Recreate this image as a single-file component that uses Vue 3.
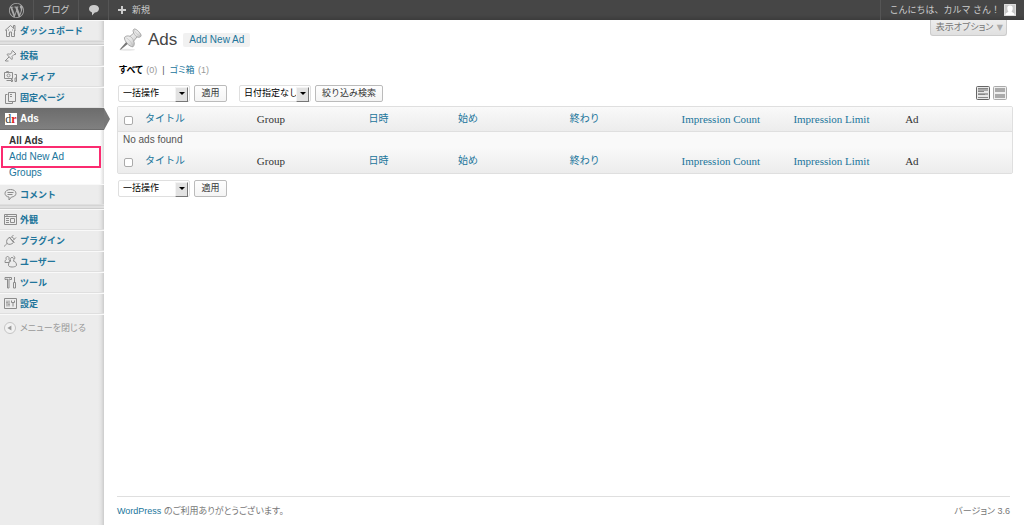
<template>
  <div class="admin">
    <header class="adminbar">
      <a href="#" class="bar-item bar-logo" aria-label="WordPress">
        <svg width="15" height="15" viewBox="0 0 20 20">
          <path fill="#aaa" d="M20 10c0-5.51-4.49-10-10-10C4.48 0 0 4.49 0 10c0 5.52 4.48 10 10 10 5.51 0 10-4.48 10-10zM7.78 15.37L4.37 6.22c.55-.02 1.17-.08 1.17-.08.5-.06.44-1.13-.06-1.11 0 0-1.45.11-2.37.11-.18 0-.37 0-.58-.01C4.12 2.69 6.87 1.11 10 1.11c2.33 0 4.45.87 6.05 2.34-.68-.11-1.65.39-1.65 1.58 0 .74.45 1.36.9 2.1.35.61.55 1.36.55 2.46 0 1.49-1.4 5-1.4 5l-3.03-8.37c.54-.02.82-.17.82-.17.5-.05.44-1.25-.06-1.22 0 0-1.44.12-2.38.12-.87 0-2.33-.12-2.33-.12-.5-.03-.56 1.2-.06 1.22l.92.08 1.26 3.41zM17.41 10c.24-.64.74-1.87.43-4.25.7 1.29 1.05 2.71 1.05 4.25 0 3.29-1.73 6.24-4.4 7.78.97-2.59 1.94-5.2 2.92-7.78zM6.1 18.09C3.12 16.65 1.11 13.53 1.11 10c0-1.3.23-2.48.72-3.59C3.25 10.3 4.67 14.2 6.1 18.09zm4.03-6.63l2.58 6.98c-.86.29-1.76.45-2.71.45-.79 0-1.57-.11-2.29-.33.81-2.38 1.62-4.74 2.42-7.1z" />
        </svg>
      </a>
      <a href="#" class="bar-item bar-site">ブログ</a>
      <a href="#" class="bar-item bar-comments" aria-label="コメント">
        <svg width="12" height="12" viewBox="0 0 12 12">
          <path fill="#ccc" d="M6 1c3 0 5 1.500 5 3.800S9 8.600 6.800 8.600L4 11.400V8.400C2.200 7.900 1 6.600 1 4.800 1 2.500 3 1 6 1z" />
        </svg>
      </a>
      <a href="#" class="bar-item bar-new">
        <svg width="8" height="8" viewBox="0 0 8 8"><path fill="#ccc" d="M3 0h2v3h3v2H5v3H3V5H0V3h3z" /></svg>
        新規
      </a>
      <a href="#" class="bar-item bar-account">
        こんにちは、カルマ さん！
        <svg width="12" height="12" viewBox="0 0 12 12">
          <path fill="#c8c8c8" d="M0 0h12v12H0z" />
          <path fill="#fff" d="M6 1.500c1.900 0 2.900 1.300 2.700 3C8.500 6.300 8 7 7.600 7.400c0 1 2.600 1 3 3V12H1.400v-1.600c.4-2 3-2 3-3C4 7 3.500 6.300 3.300 4.500c-.2-1.700.8-3 2.700-3z" />
          <path fill="none" stroke="#ddd" d="M.5.500h11v11H.5z" />
        </svg>
      </a>
    </header>

    <div class="body">
      <nav class="sidebar">
        <template v-for="item in menu" :key="item.label">
          <a href="#" :class="['menu-item', { current: item.current, last: item.last }]">
            <span v-if="item.current" class="dr-icon" aria-hidden="true">d<b>r</b></span>
            <svg v-else class="menu-icon" width="13" height="13" viewBox="0 0 13 13">
              <path v-for="d in item.paths" :key="d" :d="d" />
            </svg>
            {{ item.label }}
          </a>
          <div v-if="item.current" class="submenu">
            <a
              v-for="sub in item.submenu"
              :key="sub.label"
              href="#"
              :class="{ active: sub.active, marked: sub.marked }"
            >{{ sub.label }}</a>
          </div>
          <div v-if="item.last" class="separator"></div>
        </template>
        <button type="button" class="collapse">
          <svg width="12" height="12" viewBox="0 0 12 12">
            <circle cx="6" cy="6" r="5.500" fill="#f2f2f2" stroke="#c4c4c4" />
            <path fill="#999" d="M3.400 6l4-2.600v5.200z" />
          </svg>
          メニューを閉じる
        </button>
      </nav>

      <main class="content">
        <button type="button" class="screen-options">表示オプション <span>▼</span></button>

        <div class="heading">
          <svg width="24" height="24" viewBox="0 0 24 24">
            <defs>
              <linearGradient id="pin" x1="0" y1="0" x2="1" y2="1">
                <stop offset="0" stop-color="#fff" />
                <stop offset=".5" stop-color="#e4e4e4" />
                <stop offset="1" stop-color="#aaa" />
              </linearGradient>
            </defs>
            <ellipse cx="8" cy="21.800" rx="8" ry="1" fill="#e8e8e8" />
            <path fill="#777" d="M8.500 12.500l2 2L2 21.500l-1 .3.300-1z" />
            <path fill="url(#pin)" stroke="#888" stroke-width=".7" d="M5.400 9.500c1.300-1.800 3.600-1.900 5.600-1.200l3.800-3.300c-1-1.400-.9-3.400.3-4 2.200-.5 7.400 4.600 7 7-.6 1.300-2.600 1.600-4 .9l-3.400 4.200c.9 2 .8 4.200-.7 5.700C10.400 19 5.300 13.300 5.400 9.500z" />
            <path fill="none" stroke="#aaa" stroke-width=".7" d="M11 8.300c1.600.8 3 2.600 3.700 4.800M14.800 5c.6 1.600 1.800 3 3.300 3.900" />
            <path fill="none" stroke="#bbb" stroke-width=".6" d="M5.600 9.800c2.500-.8 7.600 4.600 8.200 8.700M15.300 1.200c-.3 2.500 4.300 6.900 6.700 6.800" />
          </svg>
          <h1>Ads</h1>
          <a href="#" class="add-new">Add New Ad</a>
        </div>

        <div class="views">
          <a href="#" class="all">すべて</a> <span>(0)</span><i>|</i><a href="#">ゴミ箱</a> <span>(1)</span>
        </div>

        <div class="tablenav">
          <span class="select bulk">
            <select aria-label="一括操作"><option>一括操作</option></select>
          </span>
          <button type="button" class="button apply">適用</button>
          <span class="select">
            <select aria-label="日付"><option>日付指定なし</option></select>
          </span>
          <button type="button" class="button">絞り込み検索</button>
          <div class="modes">
            <button type="button" aria-label="リスト表示">
              <svg width="14" height="14" viewBox="0 0 14 14">
                <rect x=".5" y=".5" width="13" height="13" rx="1" fill="#e8e8e8" stroke="#666" />
                <path fill="#aaa" d="M2 2h10v3H2zM2 7h10v2H2z" />
                <path fill="#888" d="M2 2h10v1H2zM2 5h6v1H2zM2 8h7v1H2zM2 11h10v1H2z" />
              </svg>
            </button>
            <button type="button" aria-label="抜粋表示">
              <svg width="14" height="14" viewBox="0 0 14 14">
                <rect x=".5" y=".5" width="13" height="13" rx="1" fill="#eee" stroke="#aaa" />
                <path fill="#aaa" d="M2 2h10v4H2zM2 8h10v4H2z" />
              </svg>
            </button>
          </div>
        </div>

        <table>
          <colgroup>
            <col class="col-check">
            <col v-for="col in columns" :key="col.label" :class="{ 'col-date': col.date }">
          </colgroup>
          <thead>
            <tr>
              <td><input type="checkbox" aria-label="すべて選択"></td>
              <th v-for="col in columns" :key="col.label" scope="col" :class="{ ja: col.ja }">
                <a v-if="col.sortable" href="#">{{ col.label }}</a>
                <template v-else>{{ col.label }}</template>
              </th>
            </tr>
          </thead>
          <tbody>
            <tr>
              <td colspan="9">No ads found</td>
            </tr>
          </tbody>
          <tfoot>
            <tr>
              <td><input type="checkbox" aria-label="すべて選択"></td>
              <th v-for="col in columns" :key="col.label" scope="col" :class="{ ja: col.ja }">
                <a v-if="col.sortable" href="#">{{ col.label }}</a>
                <template v-else>{{ col.label }}</template>
              </th>
            </tr>
          </tfoot>
        </table>

        <div class="tablenav">
          <span class="select bulk">
            <select aria-label="一括操作"><option>一括操作</option></select>
          </span>
          <button type="button" class="button apply">適用</button>
        </div>

        <footer>
          <p><a href="#">WordPress</a> のご利用ありがとうございます。</p>
          <p>バージョン 3.6</p>
        </footer>
      </main>
    </div>
  </div>
</template>

<script setup>
const menu = [
  {
    label: 'ダッシュボード',
    last: true,
    paths: ['M1 6.500L6.500 1.500 12 6.500M2.500 6v6.500h3V8h2v4.500h3V6M9.500 4V1.500h1.500V5', 'M4 6h1M8 6h1M4 10h.5M9 10h.5']
  },
  {
    label: '投稿',
    paths: ['M1 12l4-4M3 5.500c1-.8 2-.6 3-.2l2-1.800c-.3-.9 0-1.500.5-2L12 5c-.6.6-1.200.7-2 .5L8 7.500c.5 1.200.5 2-.2 3z', 'M1.500 12h3']
  },
  {
    label: 'メディア',
    paths: ['M.5 2.500h8v6h-8zM2.500 2.500v-1h2v1', 'M4.500 4a1.500 1.500 0 1 0 .1 0', 'M10.500 4.500h2v7h-1.500v-3.500h1.500', 'M2.500 10.500h5v-2M8.500 9.500v2H7']
  },
  {
    label: '固定ページ',
    paths: ['M4.500 1.500h7v9h-7z', 'M3.500 3.500h-2v9h7v-1.500', 'M6 3.500h2M6 5.500h2']
  },
  {
    label: 'Ads',
    current: true,
    paths: [],
    submenu: [
      { label: 'All Ads', active: true },
      { label: 'Add New Ad', marked: true },
      { label: 'Groups' }
    ]
  },
  {
    label: 'コメント',
    last: true,
    paths: ['M6.500 1.500c3 0 5.500 1.500 5.500 3.800S9.800 9 7.500 9L5 12V9C2.500 8.800 1 7.300 1 5.300c0-2.300 2.500-3.800 5.500-3.800z', 'M3.500 4.500h6M3.500 6.500h5']
  },
  {
    label: '外観',
    paths: ['M.5 1.500h12v10H.5zM.5 3.500h12', 'M6.500 5.500h4v4h-4z', 'M2 5.500h3M2 7.500h3M2 9.500h3M2.500 2.500h1']
  },
  {
    label: 'プラグイン',
    paths: ['M.5 12.500c.5-1.500 1.500-2 2.500-3C2 7 3 4.500 5.500 3.500l4 5c-2 2-4.500 2.500-6.500 1', 'M5 3l5.500 5.500M6.500 4L9.500 1M9 6.500l3-3', 'M8 3.500c1.500 0 2 1 2 2']
  },
  {
    label: 'ユーザー',
    paths: ['M3.500 1.500c1.500 0 2 1.500 1.300 3C6 5 5.500 6 5 7.500H1C1 6 1.200 5 2.300 4.500c-.7-1.500 0-3 1.200-3z', 'M8 2.500c1.700 0 2.500 1.500 1.500 3.700 2 .5 3 1.500 3 4.300-1.500 2-7.500 2-8 0C4.500 8 5 7 6.700 6.200 5.700 4 6.500 2.500 8 2.500z', 'M9.500 1c1.500.5 1.500 2 1 3']
  },
  {
    label: 'ツール',
    paths: ['M1 3.500v-2h6.500v2H6v-.5H5v9H3.500V3H2.500v.5z', 'M10.500 1v5M9.500 6.500h2v5.500h-2z']
  },
  {
    label: '設定',
    paths: ['M.5 1.500h12v10H.5z', 'M3 3.500v6M5 3.500v6M2.500 5.500h1M4.500 7.500h1', 'M7.500 3.500v2h3v-2M9 5.500v4']
  }
]

const columns = [
  { label: 'タイトル', sortable: true, ja: true },
  { label: 'Group' },
  { label: '日時', sortable: true, date: true, ja: true },
  { label: '始め', sortable: true, ja: true },
  { label: '終わり', sortable: true, ja: true },
  { label: 'Impression Count', sortable: true },
  { label: 'Impression Limit', sortable: true },
  { label: 'Ad' }
]
</script>

<style>
body {
  margin: 0;
  background: #fff;
}
</style>

<style scoped>
.admin {
  display: flex;
  flex-direction: column;
  min-height: 100vh;
  color: #555;
  font-family: "Liberation Sans", "Noto Sans CJK JP", sans-serif;
  font-size: 9px;
  line-height: 16px;
}

.admin * {
  box-sizing: border-box;
}

a {
  color: #21759b;
  text-decoration: none;
}

svg {
  display: block;
  flex: none;
}

button,
select {
  padding: 0;
  font: inherit;
  font-feature-settings: inherit;
  white-space: nowrap;
}

/* Top bar */
.adminbar {
  display: flex;
  height: 20px;
  background: linear-gradient(#464646 75%, #3c3c3c);
}

.bar-item {
  display: flex;
  align-items: center;
  justify-content: center;
  gap: 6px;
  border-right: 1px solid #555;
  color: #ccc;
}

.bar-logo {
  width: 34px;
}

.bar-site {
  width: 45px;
}

.bar-comments {
  width: 30px;
}

.bar-new {
  padding-left: 9px;
  border: 0;
}

.bar-account {
  gap: 4px;
  margin-left: auto;
  padding: 0 8px;
  border-right: 0;
  border-left: 1px solid #555;
}

.body {
  display: flex;
  flex: 1;
}

/* Side menu */
.sidebar {
  flex: none;
  width: 104px;
  background: linear-gradient(to left, #ccc, #e4e4e4 3px, #ececec 6px);
}

.menu-item {
  display: flex;
  align-items: center;
  gap: 3px;
  height: 21px;
  padding-left: 4px;
  border-top: 1px solid #f9f9f9;
  border-bottom: 1px solid #dfdfdf;
  font-weight: bold;
}

.menu-icon {
  fill: none;
  stroke: #8c8c8c;
}

.menu-item.current {
  position: relative;
  height: 22px;
  border-color: #6d6d6d;
  background: linear-gradient(#6d6d6d, #808080);
  color: #fff;
  font-size: 10px;
}

.menu-item.current::after {
  position: absolute;
  top: -1px;
  left: 100%;
  width: 6px;
  height: 22px;
  background: #777;
  clip-path: polygon(0 0, 100% 50%, 0 100%);
  content: "";
}

.dr-icon {
  width: 12px;
  height: 12px;
  margin-left: 1px;
  background: #fff;
  color: #333;
  font: 12px/12px "Liberation Serif", serif;
  text-align: center;
}

.dr-icon b {
  color: #d22;
}

.separator {
  height: 4px;
  border-top: 1px solid #d4d4d4;
  border-bottom: 1px solid #ccc;
  background: #e0e0e0;
}

.submenu {
  padding: 3px 0;
  background: linear-gradient(to left, #ddd, #fff 4px);
  font-size: 10px;
}

.submenu a {
  position: relative;
  display: block;
  padding-left: 9px;
}

.submenu .active {
  color: #333;
  font-weight: bold;
}

.submenu .marked::after {
  position: absolute;
  inset: -3px 3px -3px 1px;
  border: 2px solid #fb2b70;
  content: "";
}

.collapse {
  display: flex;
  align-items: center;
  gap: 4px;
  width: 100%;
  height: 26px;
  padding-left: 4px;
  border: 0;
  border-top: 1px solid #f9f9f9;
  background: none;
  color: #999;
  font-feature-settings: "palt";
}

/* Main column */
.content {
  position: relative;
  display: flex;
  flex: 1;
  flex-direction: column;
  min-width: 0;
  padding: 0 11px 0 13px;
  font-feature-settings: "palt";
}

.screen-options {
  position: absolute;
  top: 0;
  right: 17px;
  height: 16px;
  padding: 0 3px 0 5px;
  border: 1px solid #ccc;
  border-top: 0;
  border-radius: 0 0 3px 3px;
  background: linear-gradient(#ededed, #e0e0e0);
  color: #777;
  line-height: 15px;
}

.screen-options span {
  margin-left: 1px;
  color: #aaa;
  font-family: "DejaVu Sans", sans-serif;
  font-size: 8px;
}

.heading {
  display: flex;
  align-items: center;
  height: 24px;
  margin-top: 8px;
  padding-left: 2px;
}

h1 {
  margin: 0 6px 0 5px;
  color: #464646;
  font-size: 17px;
  font-weight: normal;
  line-height: 24px;
}

.add-new {
  padding: 0 6px;
  border-radius: 2px;
  background: #f1f1f1;
  font-size: 10px;
  line-height: 14px;
}

.views {
  margin: 10px 0 6px 2px;
}

.views span {
  color: #999;
}

.views a + span {
  margin-left: 1px;
}

.views i {
  margin: 0 5px;
  font-style: normal;
}

.views .all {
  color: #000;
  font-weight: bold;
}

.tablenav {
  display: flex;
  align-items: center;
  gap: 4px;
  height: 18px;
}

.select {
  position: relative;
  width: 72px;
  height: 17px;
}

.select.bulk {
  margin-left: 1px;
}

.select select {
  display: block;
  width: 100%;
  height: 17px;
  padding: 0 12px 0 4px;
  border: 1px solid #dfdfdf;
  border-radius: 2px;
  appearance: none;
  background: #fff;
  color: #000;
  font-feature-settings: normal;
  line-height: 15px;
}

.select::before {
  position: absolute;
  top: 2px;
  right: 2px;
  width: 11px;
  height: 13px;
  border: 1px solid;
  border-color: #f4f4f4 #777 #777 #f4f4f4;
  background: #e2e2e2;
  content: "";
  pointer-events: none;
}

.select::after {
  position: absolute;
  top: 7px;
  right: 5px;
  border: 3px solid transparent;
  border-top-color: #000;
  border-bottom: 0;
  content: "";
  pointer-events: none;
}

.button {
  height: 17px;
  padding: 0 6px;
  border: 1px solid #bbb;
  border-radius: 2px;
  background: linear-gradient(#fefefe, #f4f4f4);
  color: #333;
  font-feature-settings: normal;
  line-height: 15px;
}

.apply {
  width: 33px;
  margin-right: 8px;
}

.modes {
  display: flex;
  gap: 3px;
  margin-left: auto;
  padding-right: 6px;
}

.modes button {
  border: 0;
  background: none;
}

/* List table */
table {
  width: 100%;
  margin: 4px 0 5px;
  border: 1px solid #dfdfdf;
  border-radius: 2px;
  border-spacing: 0;
  background: #f9f9f9;
  table-layout: fixed;
}

.col-check {
  width: 22px;
}

.col-date {
  width: 10%;
}

th,
td {
  padding: 0 0 0 5px;
  text-align: left;
}

tbody td {
  font-size: 10px;
}

th {
  height: 25px;
  color: #333;
  font-family: "Liberation Serif", "Noto Sans CJK JP", serif;
  font-size: 11px;
  font-weight: normal;
}

th.ja {
  font-size: 10px;
  font-feature-settings: normal;
}

thead tr,
tfoot tr {
  background: linear-gradient(#f9f9f9, #ececec);
}

thead th,
thead td {
  border-bottom: 1px solid #dfdfdf;
}

input {
  display: block;
  width: 9px;
  height: 9px;
  margin: 3px 0 0 1px;
  border: 1px solid #aaa;
  border-radius: 2px;
  appearance: none;
  background: #fff;
}

footer {
  display: flex;
  justify-content: space-between;
  margin: auto 3px 0 0;
  padding: 6px 0;
  border-top: 1px solid #dfdfdf;
  color: #777;
}

footer p {
  margin: 0;
}
</style>
